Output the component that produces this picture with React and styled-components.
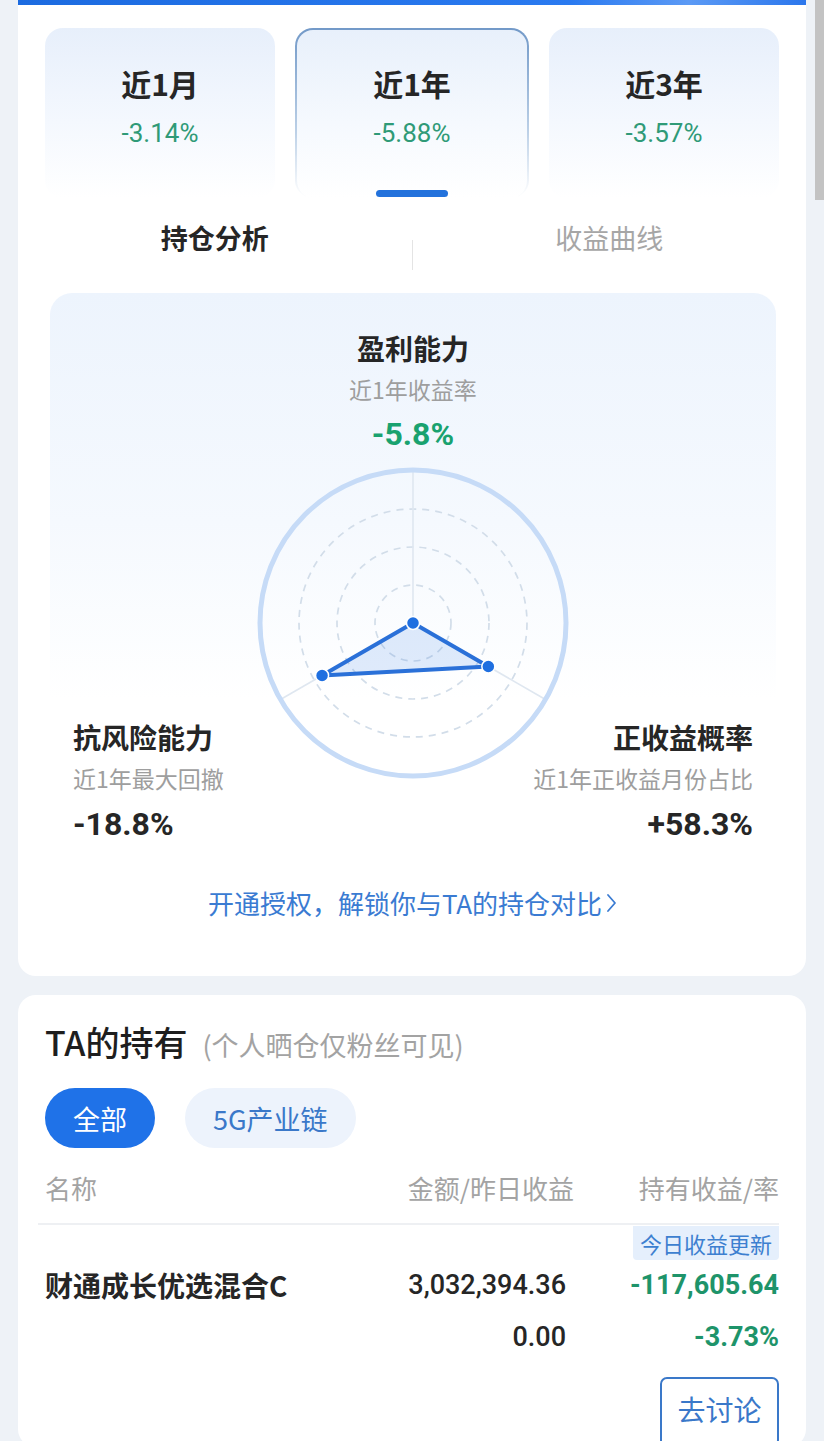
import React from "react";
import styled, { createGlobalStyle, css } from "styled-components";

const Global = createGlobalStyle`
  html, body { margin: 0; padding: 0; overflow: hidden; }
  body {
    background: #eef2f7;
    font-family: "Noto Sans CJK SC", "Noto Sans", sans-serif;
    color: #222;
  }
`;

const NUM = `"Roboto", "Noto Sans", sans-serif`;

const Page = styled.div`
  position: relative;
  height: 1441px;
  overflow: hidden;
  padding: 0 18px;
`;

const ScrollThumb = styled.div`
  position: absolute;
  top: 0;
  right: 0;
  width: 9px;
  height: 200px;
  background: #c3c3c3;
`;

const Card = styled.section`
  background: #fff;
  border-radius: ${(p) => (p.$top ? "0 0 18px 18px" : "18px")};
  padding: ${(p) => (p.$top ? "28px 27px 28px" : "27px 27px 0")};
  margin-bottom: 19px;
  position: relative;
  ${(p) =>
    p.$top &&
    css`
      border-top: 5px solid #1f6fe3;
      padding-top: 23px;
      border-image: linear-gradient(90deg, #1c6be0, #2a7af0 70%, #5c9af5 85%, #2a76ec) 1;
      border-left: 0;
      border-right: 0;
      border-bottom: 0;
    `}
`;

const Periods = styled.div`
  display: flex;
  gap: 20px;
`;

const PeriodCard = styled.div`
  flex: 1;
  height: 170px;
  box-sizing: border-box;
  border-radius: 18px;
  display: flex;
  flex-direction: column;
  align-items: center;
  padding-top: 37px;
  background: linear-gradient(180deg, #e7effb 0%, #f4f8fe 55%, #ffffff 100%);
  ${(p) =>
    p.$active &&
    css`
      border: 2px solid transparent;
      border-bottom: 0;
      padding-top: 35px;
      background: linear-gradient(180deg, #e8f0fb 0%, #f5f9fe 55%, #ffffff 100%) padding-box,
        linear-gradient(180deg, #7299c8 0%, rgba(130, 168, 210, 0.55) 60%, rgba(140, 175, 215, 0) 100%) border-box;
    `}
`;

const PeriodTitle = styled.div`
  font-size: 30px;
  line-height: 36px;
  font-weight: 700;
  color: #262626;
`;

const PeriodValue = styled.div`
  margin-top: 17px;
  font-family: ${NUM};
  font-size: 26px;
  line-height: 30px;
  color: #2f9a77;
`;

const Indicator = styled.div`
  margin-top: auto;
  margin-bottom: 1px;
  width: 72px;
  height: 7px;
  border-radius: 4px;
  background: #2372dc;
`;

const TabRow = styled.div`
  display: grid;
  grid-template-columns: 1fr 1px 1fr;
  margin: 0 -27px;
  height: 95px;
`;

const Tab = styled.div`
  text-align: center;
  padding-top: 22px;
  font-size: 27px;
  line-height: 36px;
  font-weight: ${(p) => (p.$active ? 700 : 400)};
  color: ${(p) => (p.$active ? "#262626" : "#a6a6a6")};
`;

const TabDivider = styled.div`
  margin-top: 42px;
  height: 30px;
  background: #e4e4e4;
`;

const RadarCard = styled.div`
  margin: 0 3px 0 5px;
  border-radius: 22px;
  background: linear-gradient(180deg, #edf4fd 0%, #f5f9fe 35%, #ffffff 62%);
  padding: 37px 23px 30px;
  display: flex;
  flex-direction: column;
  align-items: center;
`;

const StatTitle = styled.div`
  font-size: 28px;
  line-height: 36px;
  font-weight: 700;
  color: #262626;
`;

const StatSub = styled.div`
  margin-top: 8px;
  font-size: 23px;
  line-height: 30px;
  color: #9e9e9e;
`;

const StatValue = styled.div`
  margin-top: ${(p) => (p.$small ? 12 : 13)}px;
  font-family: ${NUM};
  font-size: 32px;
  line-height: 36px;
  font-weight: 700;
  color: ${(p) => (p.$green ? "#19a26f" : "#262626")};
`;

const RadarRow = styled.div`
  align-self: stretch;
  display: flex;
  align-items: flex-start;
  margin-top: 11px;
`;

const SideStat = styled.div`
  flex: 1;
  min-width: 0;
  margin-top: 256px;
  display: flex;
  flex-direction: column;
  align-items: ${(p) => (p.$right ? "flex-end" : "flex-start")};
  white-space: nowrap;
  position: relative;
`;

const RadarSvg = styled.svg`
  flex: none;
  width: 320px;
  height: 320px;
  display: block;
`;

const UnlockLink = styled.div`
  margin-top: 46px;
  display: flex;
  justify-content: center;
  align-items: center;
  gap: 4px;
  font-size: 26px;
  line-height: 30px;
  color: #3a7bd2;
`;

const HoldHeader = styled.div`
  display: flex;
  align-items: baseline;
  gap: 15px;
`;

const HoldTitle = styled.h2`
  margin: 0;
  font-size: 34px;
  line-height: 40px;
  font-weight: 500;
  color: #1e1e1e;
`;

const HoldNote = styled.span`
  font-size: 27px;
  color: #a3a3a3;
`;

const Chips = styled.div`
  display: flex;
  gap: 30px;
  margin-top: 24px;
`;

const Chip = styled.div`
  height: 60px;
  padding: 0 28px;
  border-radius: 30px;
  display: flex;
  align-items: center;
  font-size: 27px;
  background: ${(p) => (p.$active ? "#1f72e8" : "#edf3fc")};
  color: ${(p) => (p.$active ? "#fff" : "#3a78c9")};
`;

const TableGrid = styled.div`
  display: grid;
  grid-template-columns: 1fr 200px 205px;
`;

const HeadRow = styled(TableGrid)`
  margin-top: 24px;
  font-size: 26px;
  line-height: 32px;
  color: #a3a3a3;
  padding-bottom: 19px;
  border-bottom: 2px solid #eef0f3;
  margin-left: -7px;
  padding-left: 7px;
`;

const Cell = styled.div`
  text-align: ${(p) => (p.$right ? "right" : "left")};
`;

const BadgeLine = styled.div`
  display: flex;
  justify-content: flex-end;
  margin-top: 1px;
`;

const Badge = styled.div`
  height: 34px;
  padding: 0 7px;
  display: flex;
  align-items: center;
  background: #e5effc;
  border-radius: 0 0 4px 4px;
  font-size: 22px;
  color: #3d7fd0;
`;

const FundRow = styled(TableGrid)`
  margin-top: ${(p) => p.$mt}px;
  line-height: 36px;
  align-items: center;
`;

const FundName = styled.div`
  font-size: 28px;
  font-weight: 700;
  color: #262626;
  white-space: nowrap;
`;

const Num = styled.div`
  text-align: right;
  font-family: ${NUM};
  font-size: 27px;
  font-weight: ${(p) => (p.$green ? 700 : 500)};
  color: ${(p) => (p.$green ? "#1e946a" : "#262626")};
  padding-right: ${(p) => p.$pr || 0}px;
`;

const ActionLine = styled.div`
  display: flex;
  justify-content: flex-end;
  margin-top: 22px;
`;

const DiscussButton = styled.div`
  width: 119px;
  height: 70px;
  box-sizing: border-box;
  border: 2px solid #3a78c9;
  border-radius: 7px;
  display: flex;
  justify-content: center;
  padding-top: 10px;
  font-size: 28px;
  color: #3a78c9;
`;

function Radar() {
  const c = 160;
  const pt = (r, deg) => {
    const a = (deg * Math.PI) / 180;
    return [c + r * Math.cos(a), c + r * Math.sin(a)];
  };
  const top = pt(0, -90);
  const left = pt(105, 150);
  const right = pt(87, 30);
  const axes = [-90, 150, 30].map((d) => pt(151, d));
  return (
    <RadarSvg viewBox="0 0 320 320">
      {[38, 76, 114].map((r) => (
        <circle key={r} cx={c} cy={c} r={r} fill="none" stroke="#d2dde9" strokeWidth="1.7" strokeDasharray="7 6" />
      ))}
      {axes.map(([x, y], i) => (
        <line key={i} x1={c} y1={c} x2={x} y2={y} stroke="#dfe7f0" strokeWidth="1.6" />
      ))}
      <circle cx={c} cy={c} r={153} fill="none" stroke="#c6dbf7" strokeWidth="5" />
      <polygon
        points={[top, right, left].map((p) => p.join(",")).join(" ")}
        fill="rgba(60,130,230,0.16)"
        stroke="#2a70d8"
        strokeWidth="4"
        strokeLinejoin="round"
      />
      {[top, right, left].map(([x, y], i) => (
        <circle key={i} cx={x} cy={y} r="6.5" fill="#1f6fe0" stroke="#fff" strokeWidth="1.5" />
      ))}
    </RadarSvg>
  );
}

const periods = [
  { t: "近1月", v: "-3.14%" },
  { t: "近1年", v: "-5.88%", active: true },
  { t: "近3年", v: "-3.57%" },
];

export default function App() {
  return (
    <Page>
      <Global />
      <Card $top>
        <Periods>
          {periods.map((p) => (
            <PeriodCard key={p.t} $active={p.active}>
              <PeriodTitle>{p.t}</PeriodTitle>
              <PeriodValue>{p.v}</PeriodValue>
              {p.active && <Indicator />}
            </PeriodCard>
          ))}
        </Periods>
        <TabRow>
          <Tab $active>持仓分析</Tab>
          <TabDivider />
          <Tab>收益曲线</Tab>
        </TabRow>
        <RadarCard>
          <StatTitle>盈利能力</StatTitle>
          <StatSub>近1年收益率</StatSub>
          <StatValue $green $small>-5.8%</StatValue>
          <RadarRow>
            <SideStat>
              <StatTitle>抗风险能力</StatTitle>
              <StatSub>近1年最大回撤</StatSub>
              <StatValue>-18.8%</StatValue>
            </SideStat>
            <Radar />
            <SideStat $right>
              <StatTitle>正收益概率</StatTitle>
              <StatSub>近1年正收益月份占比</StatSub>
              <StatValue>+58.3%</StatValue>
            </SideStat>
          </RadarRow>
          <UnlockLink>
            开通授权，解锁你与TA的持仓对比
            <svg width="12" height="24" viewBox="0 0 12 24">
              <path d="M2 4 L9 12 L2 20" fill="none" stroke="#3a7bd2" strokeWidth="1.8" strokeLinecap="round" strokeLinejoin="round" />
            </svg>
          </UnlockLink>
        </RadarCard>
      </Card>

      <Card>
        <HoldHeader>
          <HoldTitle>TA的持有</HoldTitle>
          <HoldNote>(个人晒仓仅粉丝可见)</HoldNote>
        </HoldHeader>
        <Chips>
          <Chip $active>全部</Chip>
          <Chip>5G产业链</Chip>
        </Chips>
        <HeadRow>
          <Cell>名称</Cell>
          <Cell $right>金额/昨日收益</Cell>
          <Cell $right>持有收益/率</Cell>
        </HeadRow>
        <BadgeLine>
          <Badge>今日收益更新</Badge>
        </BadgeLine>
        <FundRow $mt={7}>
          <FundName>财通成长优选混合C</FundName>
          <Num $pr={8}>3,032,394.36</Num>
          <Num $green>-117,605.64</Num>
        </FundRow>
        <FundRow $mt={16}>
          <div />
          <Num $pr={8}>0.00</Num>
          <Num $green>-3.73%</Num>
        </FundRow>
        <ActionLine>
          <DiscussButton>去讨论</DiscussButton>
        </ActionLine>
      </Card>
      <ScrollThumb />
    </Page>
  );
}
